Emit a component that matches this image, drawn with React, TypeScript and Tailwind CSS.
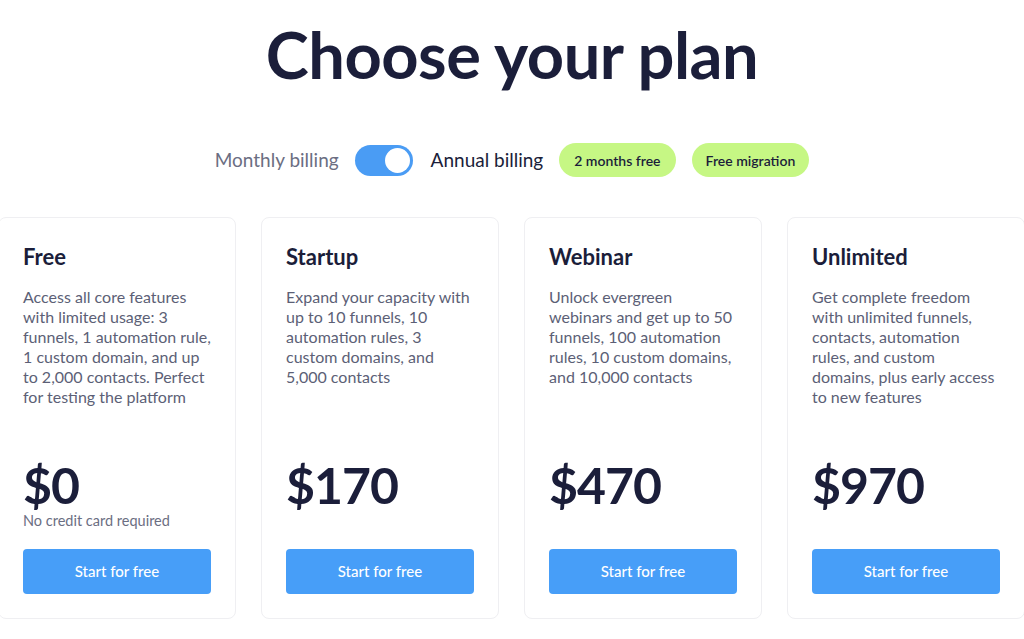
import React from "react";

const plans = [
  {
    name: "Free",
    lines: [
      "Access all core features",
      "with limited usage: 3",
      "funnels, 1 automation rule,",
      "1 custom domain, and up",
      "to 2,000 contacts. Perfect",
      "for testing the platform",
    ],
    price: "$0",
    note: "No credit card required",
  },
  {
    name: "Startup",
    lines: [
      "Expand your capacity with",
      "up to 10 funnels, 10",
      "automation rules, 3",
      "custom domains, and",
      "5,000 contacts",
    ],
    price: "$170",
    note: "",
  },
  {
    name: "Webinar",
    lines: [
      "Unlock evergreen",
      "webinars and get up to 50",
      "funnels, 100 automation",
      "rules, 10 custom domains,",
      "and 10,000 contacts",
    ],
    price: "$470",
    note: "",
  },
  {
    name: "Unlimited",
    lines: [
      "Get complete freedom",
      "with unlimited funnels,",
      "contacts, automation",
      "rules, and custom",
      "domains, plus early access",
      "to new features",
    ],
    price: "$970",
    note: "",
  },
];

const App = () => {
  return (
    <div className="w-[1024px] h-[639px] overflow-hidden bg-white font-['Lato',sans-serif] text-[#1b1e3a]">
      {/* Heading */}
      <h1 className="pt-[14px] text-center text-[65px] leading-[80px] font-bold tracking-[-0.5px]">
        Choose your plan
      </h1>

      {/* Billing toggle */}
      <div className="mt-[49px] flex items-center justify-center">
        <span className="text-[19px] text-[#6b6e82]">Monthly billing</span>
        <div className="ml-4 w-[58px] h-[31px] rounded-full bg-[#4a9cf4] flex items-center justify-end pr-[3px]">
          <div className="w-[25px] h-[25px] rounded-full bg-white" />
        </div>
        <span className="ml-[18px] text-[19px] text-[#1b1e3a]">Annual billing</span>
        <span className="ml-4 h-[34px] px-[15px] flex items-center rounded-full bg-[#c6f784] text-[14px] font-semibold">
          2 months free
        </span>
        <span className="ml-4 h-[34px] px-[14px] flex items-center rounded-full bg-[#c6f784] text-[14px] font-semibold">
          Free migration
        </span>
      </div>

      {/* Plans */}
      <div className="mt-[40px] -ml-[2px] flex gap-[25px]">
        {plans.map((p) => (
          <div
            key={p.name}
            className="shrink-0 w-[238px] h-[402px] rounded-lg border border-[#efeff2] px-6 pt-[25px] pb-6 flex flex-col"
          >
            <h3 className="text-[22px] leading-[28px] font-bold">{p.name}</h3>
            <p className="mt-[16px] text-[16px] leading-[20px] text-[#5c5f76]">
              {p.lines.map((l) => (
                <span key={l} className="block whitespace-nowrap">
                  {l}
                </span>
              ))}
            </p>
            <div className="flex-1" />
            <div className="text-[50px] leading-[54px] font-bold tracking-[-1px]">{p.price}</div>
            <div className="h-[18px] text-[14.5px] leading-[18px] text-[#6b6e82]">{p.note}</div>
            <button className="mt-[19px] h-[45px] w-full rounded bg-[#479ef8] text-white text-[15px] font-medium">
              Start for free
            </button>
          </div>
        ))}
      </div>
    </div>
  );
};

export default App;
